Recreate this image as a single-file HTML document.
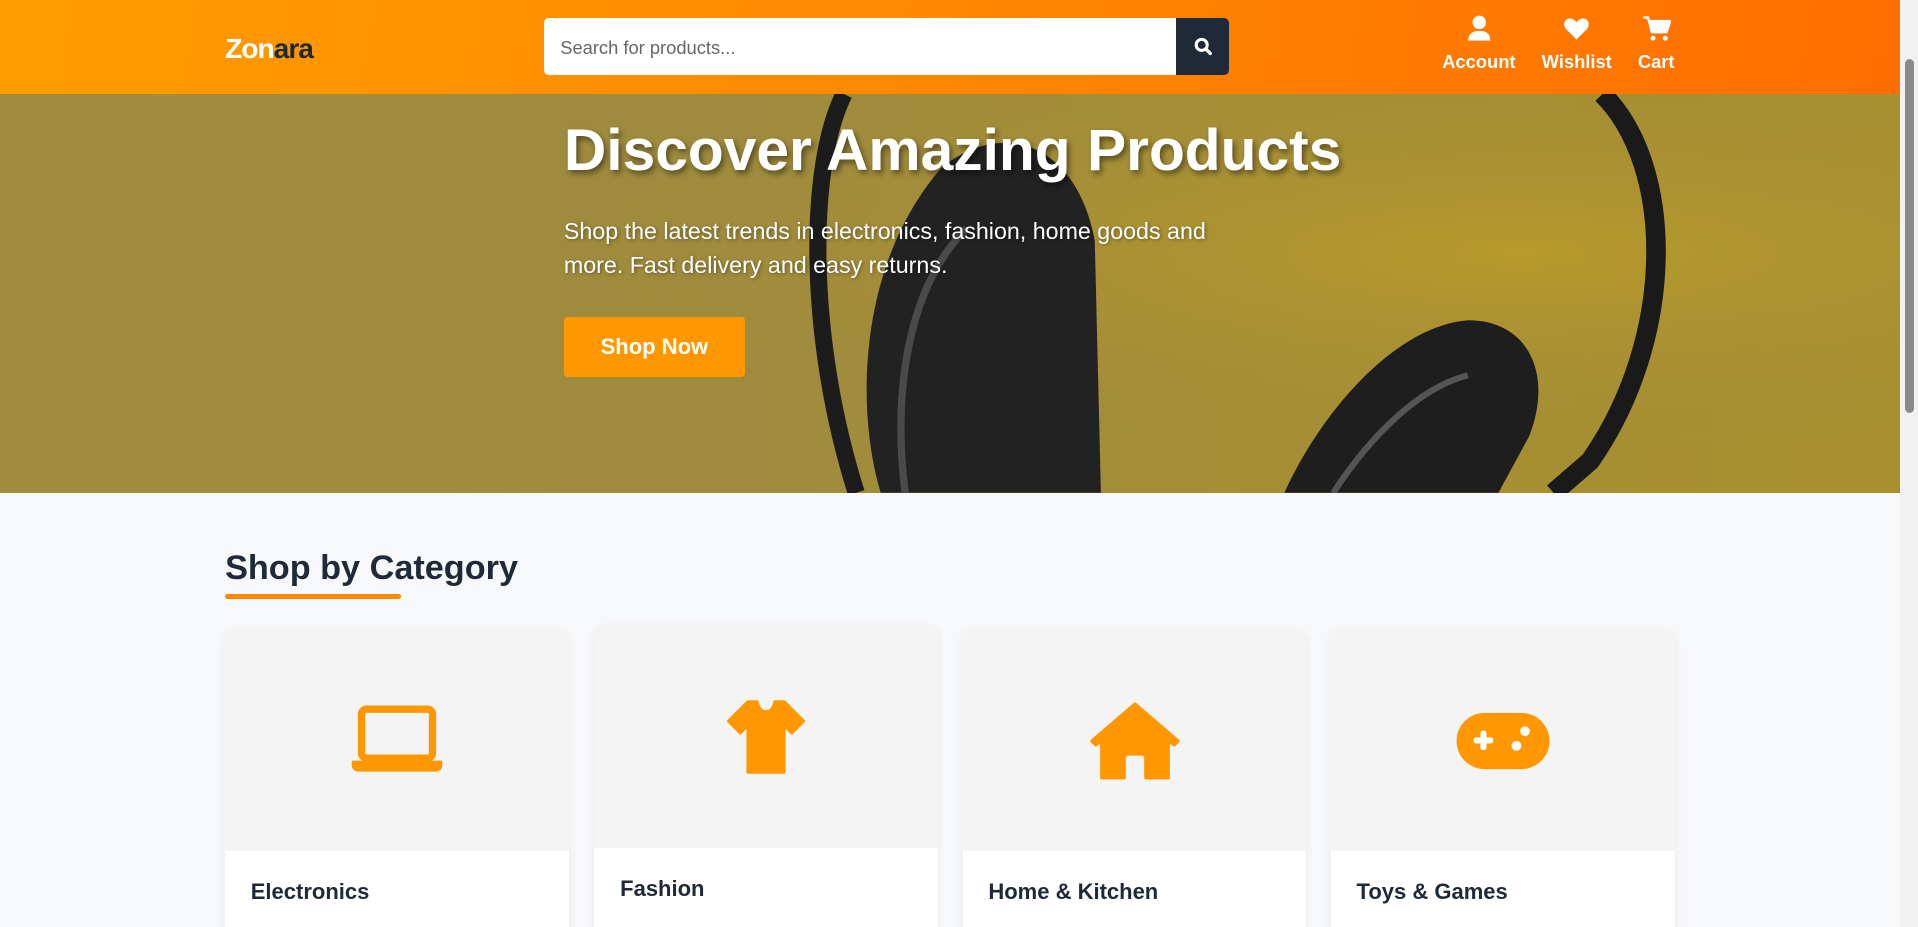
<!DOCTYPE html>
<html><head><meta charset="utf-8"><style>
html,body{margin:0;padding:0;overflow:hidden}
body{width:1918px;height:927px;background:#f7f8fa;font-family:"Liberation Sans",sans-serif}
#w{width:1568px;height:758px;zoom:1.22321;position:relative;overflow:hidden;background:#f7f8fa}
.hdr{position:absolute;left:0;top:0;width:1553px;height:77px;background:linear-gradient(100deg,#ff9d00,#ff8a00 45%,#ff6e00)}
.logo{position:absolute;left:184px;top:27px;font-size:23px;font-weight:bold;color:#fff;letter-spacing:-0.8px}
.logo span{color:#1f2937}
.search{position:absolute;left:445px;top:15px;width:560px;height:46px;background:#fff;border-radius:4px;overflow:hidden}
.search .ph{position:absolute;left:13px;top:15px;font-size:15px;color:#666}
.search .btn{position:absolute;right:0;top:0;width:44px;height:46px;background:#1f2937}
.nav{position:absolute;top:12px;color:#fff;font-size:15px;font-weight:bold;text-align:center}
.hero{position:absolute;left:0;top:77px;width:1553px;height:326px;background:linear-gradient(90deg,#a08c3c,#9f8b3d 40%,#a58e34 70%,#a8902f);overflow:hidden}
.h1{position:absolute;left:461px;top:19px;font-size:48px;font-weight:bold;color:#fff;text-shadow:2px 3px 5px rgba(0,0,0,.45);white-space:nowrap}
.p{position:absolute;left:461px;top:98px;font-size:19px;line-height:28px;color:#fff;text-shadow:1px 1px 3px rgba(0,0,0,.4);width:570px}
.shop{position:absolute;left:461px;top:182px;width:148px;height:49px;background:#ff9800;border-radius:3px;color:#fff;font-weight:bold;font-size:18px;line-height:49px;text-align:center}
.title{position:absolute;left:184px;top:449px;font-size:28px;font-weight:bold;color:#1f2937}
.ul{position:absolute;left:184px;top:486px;width:144px;height:4px;background:#ff8a00;border-radius:2px}
.card{position:absolute;width:281px;height:300px;background:#fff;border-radius:6px;box-shadow:0 2px 8px rgba(0,0,0,.06);overflow:hidden}
.card .im{height:181px;background:#f4f4f4;position:relative}
.card .im svg{position:absolute;left:50%;top:50%;transform:translate(-50%,-50%)}
.card .t{position:absolute;left:21px;top:204px;font-size:18px;font-weight:bold;color:#1f2937}
.sb{position:absolute;left:1553px;top:0;width:15px;height:758px;background:#f1f1f1}
.sb i{position:absolute;left:4px;top:48px;width:8px;height:290px;background:#8a8a8a;border-radius:4px}
</style></head><body><div id="w">
<div class="hdr">
<div class="logo">Zon<span>ara</span></div>
<div class="search"><div class="ph">Search for products...</div><div class="btn"><svg width="44" height="46" viewBox="0 0 44 46"><circle cx="21" cy="22" r="4.5" fill="none" stroke="#fff" stroke-width="2.5"/><line x1="24.5" y1="25.5" x2="28" y2="29" stroke="#fff" stroke-width="2.8" stroke-linecap="round"/></svg></div></div>
<div class="nav" style="left:1178px;width:62px"><svg width="20" height="22" viewBox="0 0 20 22"><circle cx="10" cy="6" r="5.5" fill="#fff"/><path d="M1 21c0-6 4-8 9-8s9 2 9 8z" fill="#fff"/></svg><div style="margin-top:4px">Account</div></div>
<div class="nav" style="left:1259px;width:60px"><svg width="22" height="22" viewBox="0 0 22 22"><path d="M11 20L2.5 11.5C0 9 0.5 4 4.5 3c2.5-.6 4.8.6 6.5 3 1.7-2.4 4-3.6 6.5-3 4 1 4.5 6 2 8.5z" fill="#fff"/></svg><div style="margin-top:4px">Wishlist</div></div>
<div class="nav" style="left:1338px;width:32px"><svg width="24" height="22" viewBox="0 0 24 22"><path d="M1 2h4l3 12h12l3-9H7" fill="#fff" stroke="#fff" stroke-width="2" stroke-linejoin="round"/><circle cx="9" cy="19" r="2" fill="#fff"/><circle cx="19" cy="19" r="2" fill="#fff"/></svg><div style="margin-top:4px">Cart</div></div>
</div>
<div class="hero">
<svg width="1553" height="326" style="position:absolute;left:0;top:0">
<defs><radialGradient id="g" cx="0.8" cy="0.4" r="0.5"><stop offset="0" stop-color="#b89a2a"/><stop offset="1" stop-color="#a08c3c" stop-opacity="0"/></radialGradient></defs>
<rect width="1553" height="326" fill="url(#g)"/>
<path d="M690 0 C660 60 660 200 700 326" fill="none" stroke="#1c1c1c" stroke-width="14"/>
<path d="M720 326 C700 260 700 140 770 60 C820 20 880 40 895 120 L900 326Z" fill="#222"/>
<path d="M740 326 C730 250 740 160 790 110" fill="none" stroke="#4a4a4a" stroke-width="6"/>
<path d="M1310 0 C1370 60 1370 200 1300 300 L1270 326" fill="none" stroke="#1a1a1a" stroke-width="16"/>
<path d="M1050 326 C1080 260 1140 190 1200 185 C1250 185 1270 230 1250 280 L1225 326Z" fill="#1e1e1e"/>
<path d="M1090 326 C1120 280 1160 240 1200 230" fill="none" stroke="#555" stroke-width="5"/>
</svg>
<div class="h1">Discover Amazing Products</div>
<div class="p">Shop the latest trends in electronics, fashion, home goods and more. Fast delivery and easy returns.</div>
<div class="shop">Shop Now</div>
</div>
<div class="title">Shop by Category</div><div class="ul"></div>
<div class="card" style="left:184px;top:515px"><div class="im"><svg width="80" height="60" viewBox="0 0 80 60"><rect x="11" y="4" width="58" height="40" rx="4" fill="none" stroke="#ff9800" stroke-width="6"/><path d="M3 46h74v4a5 5 0 0 1-5 5H8a5 5 0 0 1-5-5z" fill="#ff9800"/></svg></div><div class="t">Electronics</div></div>
<div class="card" style="left:486px;top:512px"><div class="im"><svg width="80" height="62" viewBox="0 0 80 62"><path d="M25 2h8c1 6 4 8 7 8s6-2 7-8h8l16 16-10 10-6-6v38H25V22l-6 6L9 18z" fill="#ff9800" stroke="#ff9800" stroke-width="2" stroke-linejoin="round"/></svg></div><div class="t">Fashion</div></div>
<div class="card" style="left:787px;top:515px"><div class="im"><svg width="74" height="64" viewBox="0 0 74 64"><path d="M37 2L2 32l3 3 5-4v31h18V44h18v18h18V31l5 4 3-3z" fill="#ff9800" stroke="#ff9800" stroke-linejoin="round" stroke-width="3"/><rect x="30" y="44" width="14" height="20" fill="#f4f4f4"/></svg></div><div class="t">Home &amp; Kitchen</div></div>
<div class="card" style="left:1088px;top:515px"><div class="im"><svg width="78" height="48" viewBox="0 0 78 48"><rect x="1" y="1" width="76" height="46" rx="23" fill="#ff9800"/><rect x="15" y="21" width="16" height="5" rx="2" fill="#fff"/><rect x="20.5" y="15.5" width="5" height="16" rx="2" fill="#fff"/><circle cx="57" cy="16" r="4" fill="#fff"/><circle cx="50" cy="28" r="4" fill="#fff"/></svg></div><div class="t">Toys &amp; Games</div></div>
<div class="sb"><i></i></div>
</div></body></html>
